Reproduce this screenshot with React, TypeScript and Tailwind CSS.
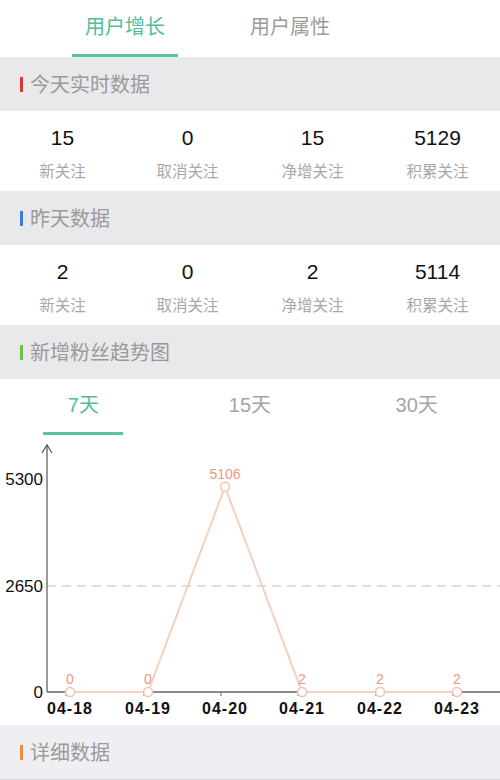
import React from 'react'

const font = { fontFamily: '"Liberation Sans", "Noto Sans CJK SC", sans-serif' }

function SectionHeader({ title, bar, bg = 'bg-[#e9e9eb]' }: { title: string; bar: string; bg?: string }) {
  return (
    <div className={`h-[54px] ${bg} flex items-center pl-[20px]`}>
      <div className={`w-[3px] h-[15px] ${bar}`} />
      <span className="ml-[7px] mt-[1px] text-[20px] text-[#9a9a9a]">{title}</span>
    </div>
  )
}

function StatsRow({ items }: { items: [string, string][] }) {
  return (
    <div className="h-[80px] bg-white grid grid-cols-4">
      {items.map(([num, label]) => (
        <div key={label} className="flex flex-col items-center pt-[15px]">
          <span className="text-[21px] leading-[24px] text-[#111]">{num}</span>
          <span className="mt-[13px] text-[15.5px] leading-[18px] text-[#a8a8a8]">{label}</span>
        </div>
      ))}
    </div>
  )
}

const points = [
  { x: 70, v: 0, label: '04-18' },
  { x: 148, v: 0, label: '04-19' },
  { x: 225, v: 5106, label: '04-20' },
  { x: 302, v: 2, label: '04-21' },
  { x: 380, v: 2, label: '04-22' },
  { x: 457, v: 2, label: '04-23' },
]

function Chart() {
  const y0 = 256
  const scale = (256 - 43) / 5300
  const py = (v: number) => y0 - v * scale
  const line = points.map((p) => `${p.x},${py(p.v)}`).join(' ')
  return (
    <svg width="500" height="289" viewBox="0 0 500 289" className="block">
      <line x1="47" y1="150" x2="500" y2="150" stroke="#bdbdbd" strokeWidth="1" strokeDasharray="9 6" />
      <line x1="47" y1="9" x2="47" y2="256" stroke="#555" strokeWidth="1.2" />
      <polyline points="42,17 47,9 52,17" fill="none" stroke="#555" strokeWidth="1.2" />
      <line x1="47" y1="256" x2="500" y2="256" stroke="#666" strokeWidth="1.5" />
      {points.map((p) => (
        <line key={p.label + 't'} x1={p.x - 4} y1="256" x2={p.x - 4} y2="260" stroke="#666" strokeWidth="1" />
      ))}
      <polyline points={line} fill="none" stroke="#f8cfc2" strokeWidth="2" />
      {points.map((p) => (
        <g key={p.label}>
          <circle cx={p.x} cy={py(p.v)} r="4.5" fill="white" stroke="#f5c3b4" strokeWidth="1.5" />
          <text x={p.x} y={py(p.v) - 8} textAnchor="middle" fontSize="14" fill="#ec9a82" style={font}>
            {p.v}
          </text>
          <text x={p.x} y="278" textAnchor="middle" fontSize="16" fontWeight="700" letterSpacing="1" fill="#111" style={font}>
            {p.label}
          </text>
        </g>
      ))}
      <text x="43" y="49" textAnchor="end" fontSize="17" fill="#111" style={font}>5300</text>
      <text x="43" y="156" textAnchor="end" fontSize="17" fill="#111" style={font}>2650</text>
      <text x="43" y="262" textAnchor="end" fontSize="17" fill="#111" style={font}>0</text>
    </svg>
  )
}

export default function App() {
  return (
    <div className="w-[500px] h-[780px] bg-white overflow-hidden" style={font}>
      {/* Top tabs */}
      <div className="h-[57px] flex pl-[72px]">
        <div className="w-[106px] flex flex-col items-center justify-between">
          <span className="mt-[12px] text-[20px] text-[#4fbe9b]">用户增长</span>
          <div className="w-full h-[3px] bg-[#5cc2a2]" />
        </div>
        <div className="ml-[59px] w-[106px] flex flex-col items-center">
          <span className="mt-[12px] text-[20px] text-[#9b9b9b]">用户属性</span>
        </div>
      </div>

      <SectionHeader title="今天实时数据" bar="bg-[#d8392b]" />
      <StatsRow items={[['15', '新关注'], ['0', '取消关注'], ['15', '净增关注'], ['5129', '积累关注']]} />

      <SectionHeader title="昨天数据" bar="bg-[#3b7be0]" />
      <StatsRow items={[['2', '新关注'], ['0', '取消关注'], ['2', '净增关注'], ['5114', '积累关注']]} />

      <SectionHeader title="新增粉丝趋势图" bar="bg-[#6cc04a]" />

      {/* Period tabs */}
      <div className="h-[57px] grid grid-cols-3">
        {['7天', '15天', '30天'].map((t, i) => (
          <div key={t} className="flex flex-col items-center justify-between">
            <span className={`mt-[11px] text-[20px] ${i === 0 ? 'text-[#4fbe9b]' : 'text-[#a5a5a5]'}`}>{t}</span>
            <div className={`w-[80px] h-[3px] mb-[1px] ${i === 0 ? 'bg-[#5cc2a2]' : 'bg-transparent'}`} />
          </div>
        ))}
      </div>

      <Chart />

      <div className="border-b border-[#dcdcdc]">
        <SectionHeader title="详细数据" bar="bg-[#ef8c3f]" bg="bg-[#efeff3]" />
      </div>
    </div>
  )
}
